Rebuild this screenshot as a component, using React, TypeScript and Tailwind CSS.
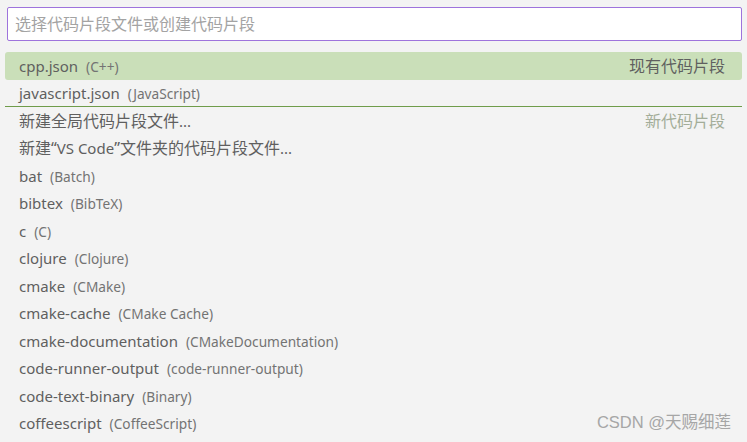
import React from 'react';

interface Item {
  label: string;
  desc?: string;
  tag?: string;
  tagMuted?: boolean;
  selected?: boolean;
  separatorAfter?: boolean;
}

const items: Item[] = [
  { label: 'cpp.json', desc: '(C++)', tag: '现有代码片段', selected: true },
  { label: 'javascript.json', desc: '(JavaScript)', separatorAfter: true },
  { label: '新建全局代码片段文件...', tag: '新代码片段', tagMuted: true },
  { label: '新建“VS Code”文件夹的代码片段文件...' },
  { label: 'bat', desc: '(Batch)' },
  { label: 'bibtex', desc: '(BibTeX)' },
  { label: 'c', desc: '(C)' },
  { label: 'clojure', desc: '(Clojure)' },
  { label: 'cmake', desc: '(CMake)' },
  { label: 'cmake-cache', desc: '(CMake Cache)' },
  { label: 'cmake-documentation', desc: '(CMakeDocumentation)' },
  { label: 'code-runner-output', desc: '(code-runner-output)' },
  { label: 'code-text-binary', desc: '(Binary)' },
  { label: 'coffeescript', desc: '(CoffeeScript)' },
];

const font = { fontFamily: '"Noto Sans", "Noto Sans CJK SC", sans-serif' };

// 漢字とラテン文字でサイズを分ける
const Mixed: React.FC<{ text: string }> = ({ text }) => {
  const parts = text.match(/[\u3000-\u9fff\uff00-\uffef“”]+|[^\u3000-\u9fff\uff00-\uffef“”]+/g) || [];
  return (
    <>
      {parts.map((p, i) =>
        /[\u3000-\u9fff\uff00-\uffef“”]/.test(p) ? (
          <span key={i} className="text-[16px]">{p}</span>
        ) : (
          <span key={i} className="text-[15px]">{p}</span>
        )
      )}
    </>
  );
};

export default function App() {
  return (
    <div
      className="relative w-[747px] h-[442px] overflow-hidden bg-[#f3f3f3]"
      style={font}
    >
      {/* 入力欄 */}
      <div className="pt-[7px] pl-[7px] pr-[5px]">
        <div className="h-[34px] bg-white border border-[#9e73dc] rounded-[2px] flex items-center pl-[7px]">
          <span className="text-[16px] text-[#a3a3a3]">选择代码片段文件或创建代码片段</span>
        </div>
      </div>

      {/* リスト */}
      <div className="mt-[11px] px-[5px]">
        {items.map((item, i) => (
          <div
            key={i}
            className={
              'h-[27.5px] flex items-center pl-[14px] pr-[17px] ' +
              (item.selected ? 'bg-[#cadfb9] rounded-[3px] ' : '') +
              (item.separatorAfter ? 'border-b border-[#6f9c4a] ' : '')
            }
          >
            <div className="flex items-baseline leading-none">
              <span className="text-[#5f5f5f] whitespace-nowrap">
                <Mixed text={item.label} />
              </span>
              {item.desc && (
                <span className="ml-[8px] text-[13.7px] text-[#737373] whitespace-nowrap">{item.desc}</span>
              )}
            </div>
            {item.tag && (
              <span
                className={
                  'ml-auto text-[16px] ' +
                  (item.tagMuted ? 'text-[#a3ad99]' : 'text-[#5f5f5f]')
                }
              >
                {item.tag}
              </span>
            )}
          </div>
        ))}
      </div>

      {/* 透かし */}
      <div
        className="absolute right-[16px] bottom-[7px] text-[16.5px] text-[#a6a6a6]"
        style={{ fontFamily: '"Liberation Sans", "Noto Sans CJK SC", sans-serif' }}
      >
        CSDN @天赐细莲
      </div>
    </div>
  );
}
